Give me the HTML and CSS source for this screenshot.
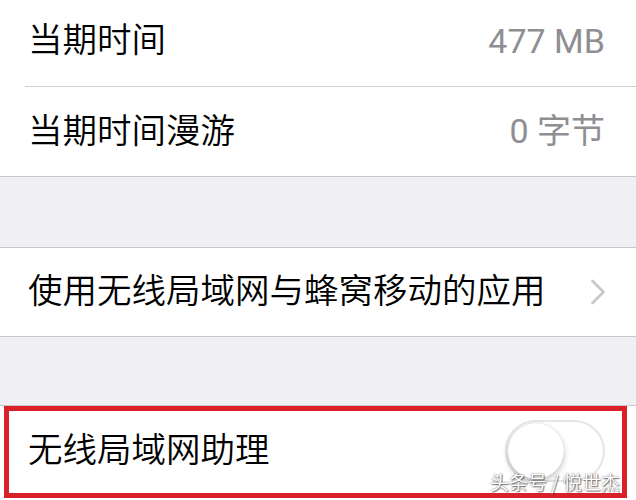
FILE: index.html
```html
<!DOCTYPE html>
<html lang="zh-CN">

<head>
    <meta charset="UTF-8">
    <meta name="viewport" content="width=device-width, initial-scale=1.0">
    <title>蜂窝移动网络</title>
    <link rel="stylesheet" href="styles.css">
</head>

<body>

    <!-- Usage -->
    <div class="group first">
        <div class="row row-top">
            <span class="label">当期时间</span>
            <span class="value">477 MB</span>
        </div>
        <div class="sep"></div>
        <div class="row row-second">
            <span class="label">当期时间漫游</span>
            <span class="value">0 字节</span>
        </div>
    </div>

    <div class="gap gap-a"></div>

    <!-- Apps -->
    <div class="group">
        <div class="row row-apps">
            <span class="label">使用无线局域网与蜂窝移动的应用</span>
            <svg class="chevron" width="16" height="26" viewBox="0 0 16 26">
                <path d="M2.5 2 L13.5 13 L2.5 24" fill="none" stroke="#c7c7cc" stroke-width="2.6" stroke-linecap="round" stroke-linejoin="round"/>
            </svg>
        </div>
    </div>

    <div class="gap gap-b"></div>

    <!-- Wi-Fi Assist -->
    <div class="group last">
        <div class="row row-assist">
            <span class="label">无线局域网助理</span>
            <div class="toggle">
                <div class="knob"></div>
            </div>
            <div class="highlight"></div>
        </div>
    </div>

    <div class="watermark">头条号 / 悦世杰</div>

</body>

</html>
```

FILE: styles.css
```css
body,
html {
    margin: 0;
    padding: 0;
    width: 636px;
    height: 500px;
    overflow: hidden;
    background-color: #efeff4;
    font-family: Roboto, "Noto Sans CJK SC", sans-serif;
}

body {
    position: relative;
}

/* Groups */
.group {
    background-color: #ffffff;
    border-top: 1px solid #c8c7cc;
    border-bottom: 1px solid #c8c7cc;
}

.group.first {
    border-top: none;
}

.group.last {
    border-bottom: none;
}

.sep {
    height: 1px;
    margin-left: 25px;
    background-color: #d0d0d4;
}

.gap-a {
    height: 70px;
}

.gap-b {
    height: 68px;
}

/* Rows */
.row {
    position: relative;
    display: flex;
    align-items: center;
    justify-content: space-between;
    padding: 0 31px 0 28px;
    box-sizing: border-box;
}

.row-top {
    height: 86px;
    padding-bottom: 4px;
}

.row-second {
    height: 89px;
}

.row-apps {
    height: 88px;
    padding-right: 30px;
}

.row-assist {
    height: 95px;
    padding-bottom: 5px;
}

.label {
    font-size: 34.5px;
    font-weight: 350;
    line-height: 1.2;
    color: #000000;
    white-space: nowrap;
}

.value {
    font-size: 34px;
    font-weight: 400;
    line-height: 1.2;
    color: #8e8e93;
}

.chevron {
    display: block;
}

/* Switch */
.toggle {
    position: relative;
    width: 100px;
    height: 62px;
    box-sizing: border-box;
    border: 2px solid #e6e6e9;
    border-radius: 31px;
    background-color: #ffffff;
}

.knob {
    position: absolute;
    top: 1px;
    left: 1px;
    width: 56px;
    height: 56px;
    border-radius: 50%;
    background-color: #ffffff;
    box-shadow: 0 3px 6px rgba(0, 0, 0, 0.22), 0 0 1px rgba(0, 0, 0, 0.25);
}

/* Red annotation frame */
.highlight {
    position: absolute;
    top: 0;
    left: 4px;
    width: 623px;
    height: 92px;
    box-sizing: border-box;
    border: 5px solid #d9202b;
    pointer-events: none;
}

.watermark {
    position: absolute;
    right: 16px;
    bottom: 5px;
    font-family: "Noto Sans CJK SC", sans-serif;
    font-size: 19px;
    color: #ffffff;
    text-shadow: 0 0 2px rgba(0, 0, 0, 0.6), 1px 1px 1px rgba(0, 0, 0, 0.45);
}
```
